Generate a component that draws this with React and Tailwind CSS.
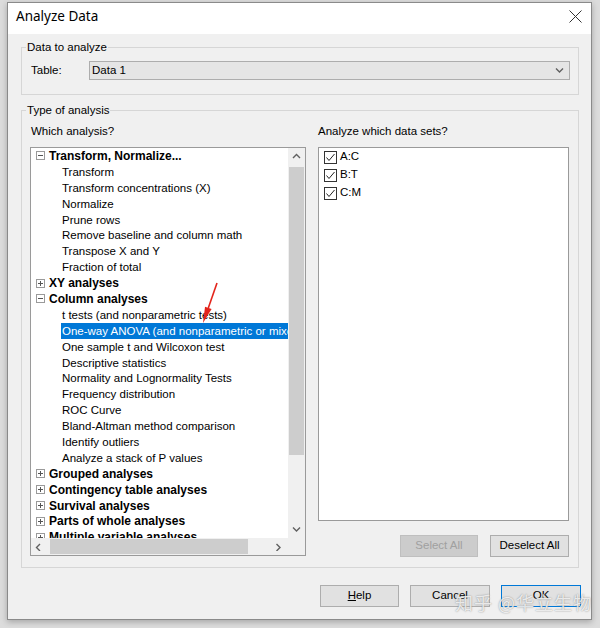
import React from "react";

const treeRows = [
  { label: "Transform, Normalize...", group: true, open: true },
  { label: "Transform" },
  { label: "Transform concentrations (X)" },
  { label: "Normalize" },
  { label: "Prune rows" },
  { label: "Remove baseline and column math" },
  { label: "Transpose X and Y" },
  { label: "Fraction of total" },
  { label: "XY analyses", group: true },
  { label: "Column analyses", group: true, open: true },
  { label: "t tests (and nonparametric tests)" },
  { label: "One-way ANOVA (and nonparametric or mixed)", selected: true },
  { label: "One sample t and Wilcoxon test" },
  { label: "Descriptive statistics" },
  { label: "Normality and Lognormality Tests" },
  { label: "Frequency distribution" },
  { label: "ROC Curve" },
  { label: "Bland-Altman method comparison" },
  { label: "Identify outliers" },
  { label: "Analyze a stack of P values" },
  { label: "Grouped analyses", group: true },
  { label: "Contingency table analyses", group: true },
  { label: "Survival analyses", group: true },
  { label: "Parts of whole analyses", group: true },
  { label: "Multiple variable analyses", group: true },
];

const dataSets = ["A:C", "B:T", "C:M"];

// small arrow used by scrollbars and the combo box
const Chevron = ({ dir = "down", className = "" }) => {
  const pts = {
    up: "1,5 4.5,1.5 8,5",
    down: "1,1.5 4.5,5 8,1.5",
    left: "5,1 1.5,4.5 5,8",
    right: "1.5,1 5,4.5 1.5,8",
  }[dir];
  return (
    <svg width="9" height="9" viewBox="0 0 9 7" className={className}>
      <polyline points={pts} fill="none" stroke="#606060" strokeWidth="1.4" />
    </svg>
  );
};

const ExpandBox = ({ open }) => (
  <svg width="9" height="9" viewBox="0 0 9 9" className="shrink-0">
    <rect x="0.5" y="0.5" width="8" height="8" fill="#fff" stroke="#9a9a9a" />
    <line x1="2" y1="4.5" x2="7" y2="4.5" stroke="#555" />
    {!open && <line x1="4.5" y1="2" x2="4.5" y2="7" stroke="#555" />}
  </svg>
);

const CheckBox = () => (
  <svg width="13" height="13" viewBox="0 0 13 13" className="shrink-0">
    <rect x="0.5" y="0.5" width="12" height="12" fill="#fff" stroke="#333" />
    <polyline points="2.5,6.5 5,9.5 10.5,3" fill="none" stroke="#222" strokeWidth="1" />
  </svg>
);

const Btn = ({ children, disabled, primary, className = "" }) => (
  <button
    className={
      "h-[22px] flex items-center justify-center text-[11.5px] border " +
      (disabled
        ? "bg-[#cccccc] border-[#bfbfbf] text-[#a0a0a0] "
        : primary
        ? "bg-[#e1e1e1] border-[#0078d7] text-black "
        : "bg-[#e1e1e1] border-[#adadad] text-black ") +
      className
    }
  >
    {children}
  </button>
);

export default function App() {
  return (
    <div className="relative w-[600px] h-[628px] overflow-hidden bg-[#dcdcdc] font-['Liberation_Sans',Arial,sans-serif] text-black">
      <div className="ml-[7px] mt-[2px] w-[585px] h-[618px] border border-[#8a8a8a] bg-[#f0f0f0] shadow-[0_2px_6px_rgba(0,0,0,0.25)] flex flex-col">
        {/* title bar */}
        <div className="h-[31px] bg-white flex items-center justify-between pl-[8px] pr-[9px] pb-[4px]">
          <span className="font-['Noto_Sans',sans-serif] text-[13.5px]">Analyze Data</span>
          <svg width="13" height="13" viewBox="0 0 13 13">
            <path d="M0.5 0.5 L12.5 12.5 M12.5 0.5 L0.5 12.5" stroke="#333" strokeWidth="1" />
          </svg>
        </div>

        {/* Data to analyze */}
        <fieldset className="ml-[13px] mt-[5px] w-[558px] h-[56px] min-w-0 border border-[#d6d6d6]">
          <legend className="ml-[4px] px-[1px] text-[11.5px] leading-[16px]">Data to analyze</legend>
          <div className="flex items-center pl-[9px] pt-[6px]">
            <span className="w-[58px] text-[11.5px]">Table:</span>
            <div className="w-[481px] h-[19px] bg-[#e5e5e5] border border-[#adadad] flex items-center justify-between pl-[2px] pr-[5px] text-[11.5px]">
              <span>Data 1</span>
              <Chevron dir="down" />
            </div>
          </div>
        </fieldset>

        {/* Type of analysis */}
        <fieldset className="ml-[13px] mt-[7px] w-[558px] h-[466px] min-w-0 border border-[#d6d6d6]">
          <legend className="ml-[4px] px-[1px] text-[11.5px] leading-[16px]">Type of analysis</legend>
          <div className="flex gap-[12px] pl-[8px] pt-[5px]">
            {/* left: tree */}
            <div className="w-[276px] flex flex-col">
              <div className="pl-[1px] text-[11.5px] leading-[16px]">Which analysis?</div>
              <div className="mt-[8px] h-[409px] border border-[#9a9a9a] bg-white grid grid-cols-[257px_17px] grid-rows-[390px_17px]">
                <div className="overflow-hidden">
                  {treeRows.map((r) => (
                    <div key={r.label} className="h-[15.9px] flex items-center whitespace-nowrap text-[11.5px]">
                      {r.group ? (
                        <div className="flex items-center pl-[5px] gap-[4px] font-bold text-[12px]">
                          <ExpandBox open={r.open} />
                          <span>{r.label}</span>
                        </div>
                      ) : (
                        <span
                          className={
                            "ml-[30px] pl-[1px] pr-[2px] leading-[16px] " +
                            (r.selected ? "bg-[#0078d7] text-white" : "")
                          }
                        >
                          {r.label}
                        </span>
                      )}
                    </div>
                  ))}
                </div>
                {/* vertical scrollbar */}
                <div className="bg-[#f0f0f0] flex flex-col items-center">
                  <div className="h-[17px] flex items-center justify-center">
                    <Chevron dir="up" />
                  </div>
                  <div className="mt-[2px] w-[15px] h-[288px] bg-[#cdcdcd]" />
                  <div className="flex-1" />
                  <div className="h-[17px] flex items-center justify-center">
                    <Chevron dir="down" />
                  </div>
                </div>
                {/* horizontal scrollbar */}
                <div className="bg-[#f0f0f0] flex items-center">
                  <div className="w-[17px] flex items-center justify-center">
                    <Chevron dir="left" />
                  </div>
                  <div className="ml-[2px] w-[198px] h-[15px] bg-[#cdcdcd]" />
                  <div className="flex-1" />
                  <div className="w-[17px] flex items-center justify-center">
                    <Chevron dir="right" />
                  </div>
                </div>
                <div className="bg-[#f0f0f0]" />
              </div>
            </div>

            {/* right: data sets */}
            <div className="w-[251px] flex flex-col">
              <div className="text-[11.5px] leading-[16px]">Analyze which data sets?</div>
              <div className="mt-[8px] h-[374px] border border-[#9a9a9a] bg-white pl-[5px]">
                {dataSets.map((d) => (
                  <div key={d} className="h-[18px] flex items-center gap-[3px] text-[11.5px]">
                    <CheckBox />
                    <span>{d}</span>
                  </div>
                ))}
              </div>
              <div className="mt-[14px] flex justify-end gap-[12px]">
                <Btn disabled className="w-[78px]">Select All</Btn>
                <Btn className="w-[79px]">Deselect All</Btn>
              </div>
            </div>
          </div>
        </fieldset>

        {/* dialog buttons */}
        <div className="mt-[17px] flex justify-end gap-[11px] pr-[10px]">
          <Btn className="w-[79px]">
            <span className="underline">H</span>elp
          </Btn>
          <Btn className="w-[80px]">Cancel</Btn>
          <Btn primary className="w-[80px]">OK</Btn>
        </div>
      </div>

      {/* red annotation arrow */}
      <svg width="30" height="48" viewBox="0 0 30 48" className="absolute left-[195px] top-[280px]">
        <line x1="22" y1="3" x2="13.3" y2="28" stroke="#e3241b" strokeWidth="1.6" />
        <polygon points="8,43 10,26.7 16.6,29" fill="#e3241b" />
      </svg>

      {/* watermark */}
      <div className="absolute left-[455px] top-[589px] font-['Noto_Sans_CJK_SC',sans-serif] text-[18px] text-white/80 [text-shadow:0_0_1.5px_#777] tracking-[1px]">
        知乎 @华立生物
      </div>
    </div>
  );
}
